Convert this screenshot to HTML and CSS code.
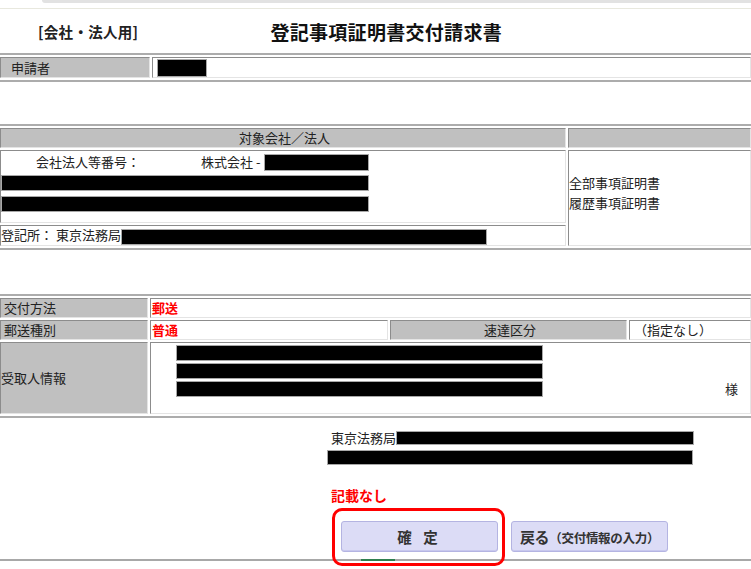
FILE: index.html
```html
<!DOCTYPE html>
<html lang="ja">
<head>
<meta charset="utf-8">
<title>登記事項証明書交付請求書</title>
<link rel="stylesheet" href="styles.css">
</head>
<body>
<div class="topbar"></div>
<div class="topline"></div>
<header class="head">
  <div class="kind">[会社・法人用]</div>
  <h1 class="title">登記事項証明書交付請求書</h1>
</header>

<table class="grid t1">
  <colgroup><col class="c150"><col></colgroup>
  <tr>
    <td class="lab lab1">申請者</td>
    <td class="val"><span class="blk" style="width:48px;height:16px"></span></td>
  </tr>
</table>

<table class="grid t2">
  <colgroup><col class="c566"><col></colgroup>
  <tr>
    <td class="lab center hdr">対象会社／法人</td>
    <td class="lab hdr"></td>
  </tr>
  <tr>
    <td class="val corp">
      <div class="corp-line1"><span class="cno">会社法人等番号：</span><span class="kk">株式会社 -</span><span class="blk" style="width:103px;height:15px"></span></div>
      <div class="corp-line"><span class="blk" style="width:366px;height:14px"></span></div>
      <div class="corp-line"><span class="blk" style="width:366px;height:14px"></span></div>
    </td>
    <td class="val certs" rowspan="2">全部事項証明書<br>履歴事項証明書</td>
  </tr>
  <tr>
    <td class="val reg">登記所： 東京法務局<span class="blk" style="width:364px;height:14px"></span></td>
  </tr>
</table>

<table class="grid t3">
  <colgroup><col class="c148"><col class="c238"><col class="c237"><col></colgroup>
  <tr>
    <td class="lab">交付方法</td>
    <td class="val red" colspan="3">郵送</td>
  </tr>
  <tr>
    <td class="lab">郵送種別</td>
    <td class="val red">普通</td>
    <td class="lab center">速達区分</td>
    <td class="val">（指定なし）</td>
  </tr>
  <tr>
    <td class="lab recv">受取人情報</td>
    <td class="val addr" colspan="3">
      <div class="addr-wrap">
        <div class="addr-boxes">
          <span class="blk" style="width:365px;height:14px"></span>
          <span class="blk" style="width:365px;height:14px"></span>
          <span class="blk" style="width:365px;height:14px"></span>
        </div>
        <span class="sama">様</span>
      </div>
    </td>
  </tr>
</table>

<section class="bottom">
  <div class="office">東京法務局<span class="blk" style="width:296px;height:12px"></span></div>
  <div class="office2"><span class="blk" style="width:364px;height:13px"></span></div>
  <div class="none">記載なし</div>
  <div class="buttons">
    <div class="hl-wrap">
      <button class="btn">確 定</button>
      <span class="highlight"></span>
    </div>
    <button class="btn back">戻る<span class="small">（交付情報の入力）</span></button>
  </div>
</section>
<div class="footline"><span class="green"></span></div>
</body>
</html>
```

FILE: styles.css
```css
html, body {
  margin: 0;
  padding: 0;
  background: #ffffff;
}
body {
  width: 751px;
  height: 569px;
  overflow: hidden;
  font-family: "Noto Sans CJK JP", "Noto Sans", sans-serif;
  font-size: 13px;
  color: #222;
}
.topbar {
  height: 3px;
  margin-left: 42px;
  background: #e2e2e2;
  border-bottom-left-radius: 4px;
}
.topline {
  height: 1px;
  margin-top: 5px;
  background: #e8e8de;
}
.head {
  display: flex;
  align-items: center;
  height: 44px;
}
.kind {
  margin-left: 38px;
  font-size: 14.5px;
  font-weight: bold;
  color: #222;
  letter-spacing: 0.3px;
}
.title {
  margin: 0 0 0 132px;
  font-size: 19px;
  font-weight: bold;
  color: #111;
  letter-spacing: 0.3px;
}
.grid {
  width: 755px;
  margin-left: -2px;
  border-collapse: separate;
  border-spacing: 2px;
  table-layout: fixed;
  border-top: 2px solid #acacac;
  border-bottom: 2px solid #acacac;
}
.grid td {
  padding: 0 0 0 4px;
  height: 18px;
  line-height: 18px;
  white-space: nowrap;
  overflow: hidden;
  border: 1px solid;
  border-color: #8c8c8c #e4e4e4 #e4e4e4 #8c8c8c;
  vertical-align: middle;
}
.c150 { width: 150px; }
.c148 { width: 148px; }
.c566 { width: 566px; }
.c238 { width: 238px; }
.c237 { width: 237px; }
.lab {
  background: #c0c0c0;
  color: #222;
  padding-left: 3px !important;
}
.lab1 { padding-left: 10px !important; }
.center { text-align: center; }
.val { background: #fff; }
.red {
  color: #ff0000;
  font-weight: bold;
  padding-left: 1px !important;
}
.blk {
  display: inline-block;
  background: #000;
  border: 1px solid #a8a8a8;
  vertical-align: middle;
}
.t2 { margin-top: 42px; }
.t3 { margin-top: 44px; }
.corp {
  padding: 2px 0 10px 0 !important;
  vertical-align: top !important;
}
.corp-line1 {
  display: flex;
  align-items: center;
  height: 18px;
}
.cno { margin-left: 35px; width: 165px; }
.kk { margin-right: 4px; }
.corp-line {
  display: flex;
  align-items: center;
  height: 16px;
  margin-top: 4px;
}
.corp-line + .corp-line { margin-top: 5px; }
.certs {
  line-height: 20px !important;
  padding: 0 0 10px 0 !important;
}
.reg {
  padding-left: 0 !important;
}
.recv { padding-left: 0 !important; }
.addr {
  padding: 2px 12px 2px 25px !important;
  height: 66px !important;
  vertical-align: top !important;
}
.addr-wrap {
  display: flex;
  align-items: flex-end;
  justify-content: space-between;
  height: 66px;
}
.addr-boxes {
  display: flex;
  flex-direction: column;
  gap: 2px;
  align-self: flex-start;
}
.sama { line-height: 20px; margin-bottom: 12px; }
.bottom {
  padding-left: 327px;
  padding-top: 12px;
}
.office {
  display: flex;
  align-items: center;
  padding-left: 4px;
  height: 16px;
}
.office2 {
  margin-top: 4px;
  height: 16px;
  display: flex;
  align-items: center;
}
.none {
  margin-top: 19px;
  padding-left: 4px;
  color: #ff0000;
  font-weight: bold;
  font-size: 14px;
  line-height: 20px;
}
.buttons {
  display: flex;
  gap: 13px;
  margin-top: 16px;
  padding-left: 14px;
}
.hl-wrap { position: relative; }
.btn {
  display: block;
  width: 157px;
  height: 31px;
  background: #dcdcf6;
  border: 1px solid #b4b4e2;
  border-radius: 3px;
  box-shadow: inset 0 -1px 0 #c8c8ee;
  font-family: "Noto Sans CJK JP", sans-serif;
  font-size: 14.5px;
  font-weight: bold;
  color: #333;
  padding: 0;
  letter-spacing: 4px;
}
.btn.back { font-size: 15px; letter-spacing: -0.3px; }
.btn .small { font-size: 12.5px; }
.highlight {
  position: absolute;
  left: -9px;
  top: -13px;
  width: 167px;
  height: 52px;
  border: 3px solid #ff0000;
  border-radius: 10px;
  z-index: 2;
}
.footline {
  position: relative;
  height: 2px;
  margin-top: 7px;
  background: #a8a8a8;
}
.green {
  position: absolute;
  left: 361px;
  top: 0;
  width: 34px;
  height: 2px;
  background: #2f7f4f;
}
```
